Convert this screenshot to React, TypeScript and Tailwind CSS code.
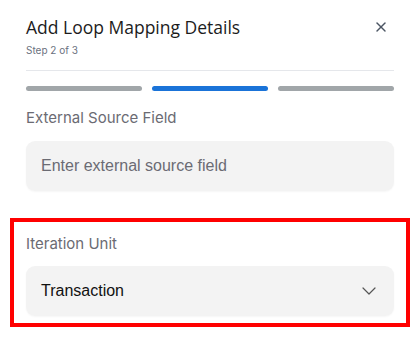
import { ChevronDown, X } from 'lucide-react';

export default function App() {
  return (
    <div className="w-[420px] h-[354px] bg-white font-['Liberation_Sans',Arial,sans-serif] overflow-hidden">
      <div className="px-[26px] pt-[15px]">
        <div className="flex items-start justify-between">
          <div>
            <h2 className="font-['Open_Sans',sans-serif] font-medium text-[17.5px] leading-[24px] text-[#1c1c1c]">
              Add Loop Mapping Details
            </h2>
            <p className="mt-[4px] font-['Inter',sans-serif] text-[10px] leading-[14px] text-[#6b7280]">Step 2 of 3</p>
          </div>
          <button className="mt-[4px] mr-[5px] text-[#4b5563]">
            <X className="w-[16px] h-[16px]" strokeWidth={2.2} />
          </button>
        </div>
        <div className="mt-[13px] h-px bg-[#e5e7eb]" />
        <div className="mt-[15px] flex gap-[10px]">
          <div className="flex-1 h-[5px] rounded-full bg-[#a1a6a9]" />
          <div className="flex-1 h-[5px] rounded-full bg-[#1a73d8]" />
          <div className="flex-1 h-[5px] rounded-full bg-[#a1a6a9]" />
        </div>
        <label className="block mt-[17px] font-['Inter',sans-serif] text-[15px] leading-[20px] text-[#6b6b73]">
          External Source Field
        </label>
        <input
          className="mt-[13px] w-full h-[50px] rounded-[9px] bg-[#f3f3f3] px-[15px] text-[16px] text-[#1c1c1c] placeholder:text-[#6b6b73] outline-none shadow-[0_1px_2px_rgba(0,0,0,0.04)]"
          placeholder="Enter external source field"
        />
      </div>
      <div className="mx-[10px] mt-[27px] border-4 border-[#ff0000] px-[12px] pt-[12px] pb-[7px]">
        <label className="block font-['Inter',sans-serif] text-[15px] leading-[20px] text-[#6b6b73]">Iteration Unit</label>
        <div className="mt-[12px] h-[50px] rounded-[9px] bg-[#f3f3f3] pl-[15px] pr-[13px] flex items-center justify-between shadow-[0_1px_2px_rgba(0,0,0,0.04)]">
          <span className="text-[16px] text-[#111]">Transaction</span>
          <ChevronDown className="w-[24px] h-[24px] text-[#555]" strokeWidth={1.2} />
        </div>
      </div>
    </div>
  );
}
